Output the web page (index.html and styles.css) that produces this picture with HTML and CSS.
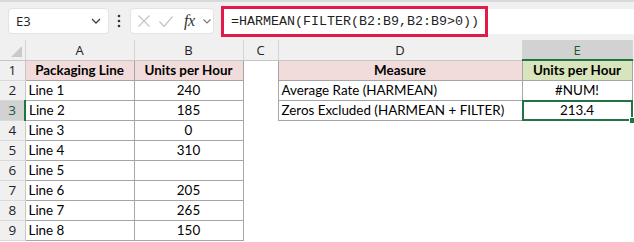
FILE: index.html
```html
<!DOCTYPE html>
<html lang="en">
<head>
  <meta charset="UTF-8" />
  <title>HARMEAN with FILTER</title>
  <link rel="stylesheet" href="styles.css">
</head>
<body>
  <div class="toolbar">
    <div class="name-box">
      <span class="cell-ref">E3</span>
      <svg class="chev" width="10" height="6" viewBox="0 0 10 6"><path d="M1 1l4 4 4-4" fill="none" stroke="#404040" stroke-width="1.3"/></svg>
    </div>
    <svg class="grip" width="4" height="14" viewBox="0 0 4 14">
      <circle cx="2" cy="2" r="1.3" fill="#333"/>
      <circle cx="2" cy="7" r="1.3" fill="#333"/>
      <circle cx="2" cy="12" r="1.3" fill="#333"/>
    </svg>
    <div class="fx-box">
      <svg class="cancel" width="12" height="12" viewBox="0 0 12 12"><path d="M0.5 0.5l11 11M11.5 0.5l-11 11" stroke="#c4c4c4" stroke-width="1.2"/></svg>
      <svg class="enter" width="14" height="11" viewBox="0 0 14 11"><path d="M0.5 5.5l4.5 5 8.5-10" fill="none" stroke="#c4c4c4" stroke-width="1.2"/></svg>
      <span class="fx">fx</span>
      <svg class="chev small" width="8" height="5" viewBox="0 0 8 5"><path d="M0.5 0.5l3.5 3.5 3.5-3.5" fill="none" stroke="#777" stroke-width="1.1"/></svg>
    </div>
    <div class="formula-input">
      <span class="formula-mark">=HARMEAN(FILTER(B2:B9,B2:B9&gt;0))</span>
    </div>
  </div>

  <table class="sheet">
    <colgroup>
      <col class="w-rh"><col class="w-a"><col class="w-b"><col class="w-c"><col class="w-d"><col class="w-e"><col class="w-rest">
    </colgroup>
    <tr class="col-heads">
      <th class="corner"><span class="tri"></span></th>
      <th>A</th><th>B</th><th>C</th><th>D</th><th class="sel-col">E</th><th></th>
    </tr>
    <tr>
      <th class="rh">1</th>
      <td class="bx head pink">Packaging Line</td>
      <td class="bx head pink">Units per Hour</td>
      <td></td>
      <td class="bx head pink">Measure</td>
      <td class="bx head green">Units per Hour</td>
      <td></td>
    </tr>
    <tr>
      <th class="rh">2</th>
      <td class="bx">Line 1</td><td class="bx num">240</td><td></td>
      <td class="bx">Average Rate (HARMEAN)</td><td class="bx num">#NUM!</td><td></td>
    </tr>
    <tr>
      <th class="rh sel-row">3</th>
      <td class="bx">Line 2</td><td class="bx num">185</td><td></td>
      <td class="bx">Zeros Excluded (HARMEAN + FILTER)</td><td class="bx num active">213.4</td><td></td>
    </tr>
    <tr>
      <th class="rh">4</th>
      <td class="bx">Line 3</td><td class="bx num">0</td><td></td><td></td><td></td><td></td>
    </tr>
    <tr>
      <th class="rh">5</th>
      <td class="bx">Line 4</td><td class="bx num">310</td><td></td><td></td><td></td><td></td>
    </tr>
    <tr>
      <th class="rh">6</th>
      <td class="bx">Line 5</td><td class="bx num"></td><td></td><td></td><td></td><td></td>
    </tr>
    <tr>
      <th class="rh">7</th>
      <td class="bx">Line 6</td><td class="bx num">205</td><td></td><td></td><td></td><td></td>
    </tr>
    <tr>
      <th class="rh">8</th>
      <td class="bx">Line 7</td><td class="bx num">265</td><td></td><td></td><td></td><td></td>
    </tr>
    <tr>
      <th class="rh">9</th>
      <td class="bx">Line 8</td><td class="bx num">150</td><td></td><td></td><td></td><td></td>
    </tr>
  </table>
</body>
</html>
```

FILE: styles.css
```css
body {
  margin: 0;
  background-color: #ffffff;
  font-family: Lato, 'Noto Sans', sans-serif;
  color: #000;
  overflow: hidden;
}

/* formula bar */
.toolbar {
  display: flex;
  align-items: center;
  height: 38px;
  border-top: 2px solid #d9d9d9;
  background-color: #f0f0f0;
  padding-left: 8px;
}
.name-box {
  display: flex;
  align-items: center;
  justify-content: space-between;
  box-sizing: border-box;
  width: 101px;
  height: 26px;
  padding: 0 7px;
  background-color: #fff;
  border: 1px solid #e3e3e3;
  border-radius: 4px;
  font-family: 'Open Sans', 'Noto Sans', sans-serif;
  font-size: 13px;
  color: #222;
}
.grip {
  margin-left: 8px;
}
.fx-box {
  display: flex;
  align-items: center;
  box-sizing: border-box;
  width: 84px;
  height: 26px;
  margin-left: 9px;
  padding-left: 7px;
  background-color: #fff;
  border: 1px solid #e3e3e3;
  border-radius: 4px;
}
.enter {
  margin-left: 9px;
}
.fx {
  margin-left: 11px;
  font-family: 'Liberation Serif', serif;
  font-style: italic;
  font-size: 16px;
  color: #333;
  letter-spacing: -0.5px;
}
.chev.small {
  margin-left: 8px;
}
.formula-input {
  flex: 1;
  display: flex;
  align-items: center;
  height: 25px;
  margin-left: 7px;
  background-color: #fff;
}
.formula-mark {
  display: flex;
  align-items: center;
  box-sizing: border-box;
  width: 267px;
  height: 31px;
  padding-left: 7px;
  border: 3px solid #e2194b;
  font-family: 'Liberation Mono', monospace;
  font-size: 13.33px;
  color: #1f1f1f;
}

/* grid */
.sheet {
  border-collapse: collapse;
  table-layout: fixed;
  width: 634px;
}
.w-rh { width: 25px; }
.w-a { width: 109px; }
.w-b { width: 109px; }
.w-c { width: 35px; }
.w-d { width: 244px; }
.w-e { width: 110px; }
.w-rest { width: 2px; }

.sheet tr {
  height: 20px;
}
.sheet td {
  padding: 0 3px;
  font-size: 13.4px;
  white-space: nowrap;
  overflow: visible;
}
.col-heads th {
  height: 19px;
  padding: 0;
  background-color: #f0f0f0;
  border-right: 1px solid #d4d4d4;
  border-bottom: 1px solid #c6c6c6;
  font-family: 'Open Sans', 'Noto Sans', sans-serif;
  font-weight: normal;
  font-size: 13px;
  color: #222;
}
.corner {
  position: relative;
}
.tri {
  position: absolute;
  right: 3px;
  bottom: 3px;
  width: 0;
  height: 0;
  border-left: 11px solid transparent;
  border-bottom: 11px solid #c9c9c9;
}
.col-heads .sel-col {
  background-color: #d2d2d2;
  border-bottom: 2px solid #217346;
  color: #185c37;
}
.rh {
  padding: 0;
  background-color: #f0f0f0;
  border-right: 1px solid #c6c6c6;
  border-bottom: 1px solid #d9d9d9;
  font-family: 'Open Sans', 'Noto Sans', sans-serif;
  font-weight: normal;
  font-size: 13.5px;
  color: #222;
}
.rh.sel-row {
  background-color: #d2d2d2;
  border-right: 2px solid #217346;
  color: #185c37;
}
.bx {
  border: 1px solid #a6a6a6;
}
.sheet td.head {
  font-weight: bold;
  text-align: center;
}
.pink {
  background-color: #f2dcdb;
}
.green {
  background-color: #d8e4bc;
}
.num {
  text-align: center;
}
.active {
  position: relative;
}
.active::before {
  content: "";
  position: absolute;
  left: -1px;
  top: -1px;
  right: -1px;
  bottom: -1px;
  border: 2px solid #217346;
}
.active::after {
  content: "";
  position: absolute;
  right: -4px;
  bottom: -4px;
  width: 5px;
  height: 5px;
  background-color: #217346;
  border: 1px solid #fff;
}
```
